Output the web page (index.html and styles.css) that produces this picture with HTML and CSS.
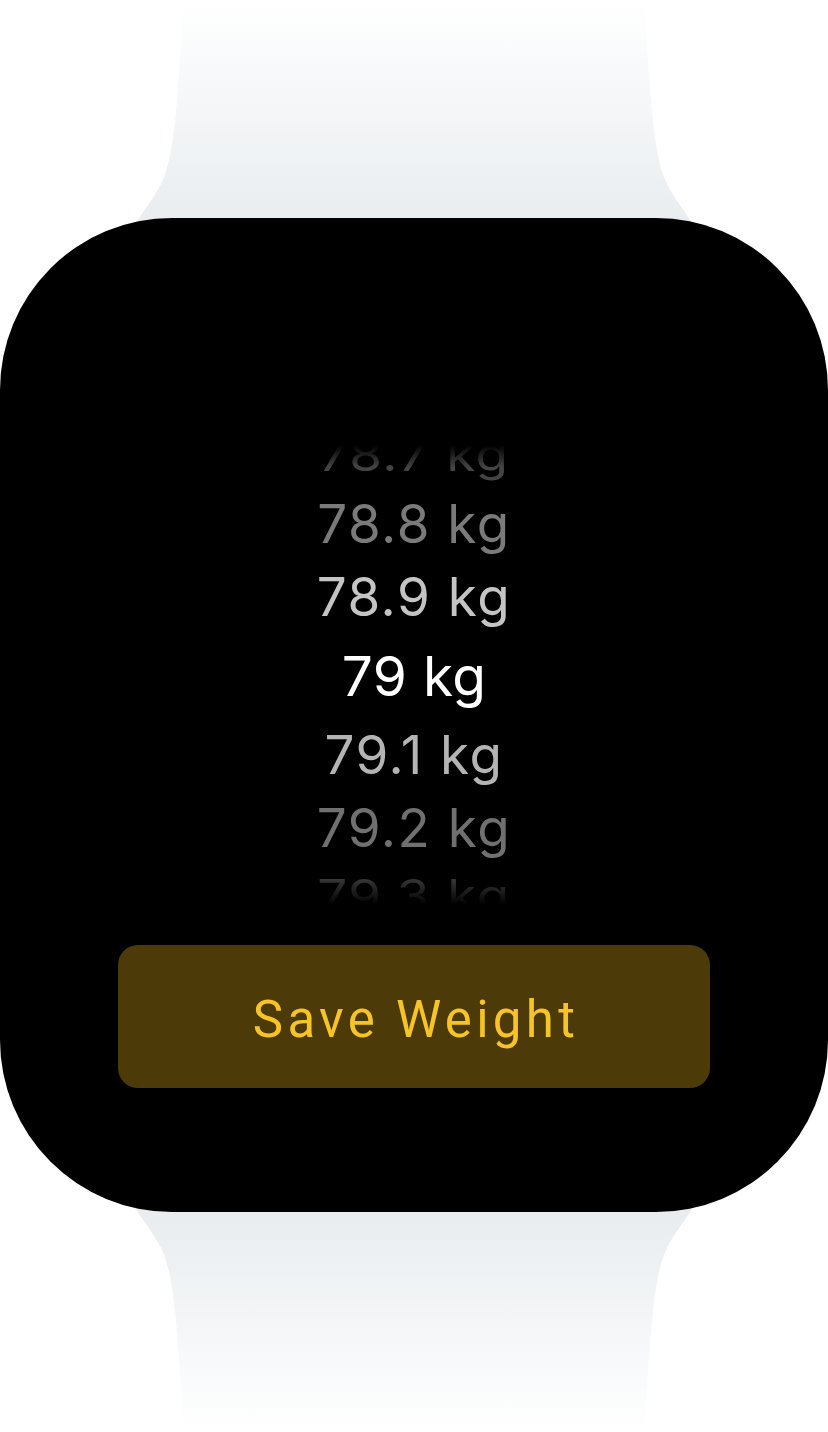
FILE: index.html
```html
<!DOCTYPE html>
<html lang="en">
<head>
<meta charset="utf-8">
<title>Save Weight</title>
<link rel="stylesheet" href="styles.css">
</head>
<body>
<div class="watch">
  <svg class="band band-top" width="828" height="240" viewBox="0 0 828 240" aria-hidden="true">
    <defs>
      <linearGradient id="gTop" x1="0" y1="0" x2="0" y2="1">
        <stop offset="0" stop-color="#ffffff"/>
        <stop offset="0.92" stop-color="#e9edf0"/>
        <stop offset="1" stop-color="#e9edf0"/>
      </linearGradient>
    </defs>
    <path d="M184,0 L180,60 C176,120 172,160 162,182 C152,202 140,214 126,240 L702,240 C688,214 676,202 666,182 C656,160 652,120 648,60 L644,0 Z" fill="url(#gTop)"/>
  </svg>
  <div class="face">
    <div class="picker">
      <div class="wheel">
        <div class="row r3 far">78.7 kg</div>
        <div class="row r2 mid">78.8 kg</div>
        <div class="row r1 near">78.9 kg</div>
        <div class="row r0 sel">79 kg</div>
        <div class="row r1 near2">79.1 kg</div>
        <div class="row r2 mid2">79.2 kg</div>
        <div class="row r3 far">79.3 kg</div>
      </div>
    </div>
    <button class="save">Save Weight</button>
  </div>
  <svg class="band band-bottom" width="828" height="240" viewBox="0 0 828 240" aria-hidden="true">
    <defs>
      <linearGradient id="gBot" x1="0" y1="0" x2="0" y2="1">
        <stop offset="0" stop-color="#e9edf0"/>
        <stop offset="0.1" stop-color="#e9edf0"/>
        <stop offset="1" stop-color="#ffffff"/>
      </linearGradient>
    </defs>
    <path d="M126,0 C140,26 152,38 162,58 C172,80 176,120 180,180 L184,240 L644,240 L648,180 C652,120 656,80 666,58 C676,38 688,26 702,0 Z" fill="url(#gBot)"/>
  </svg>
</div>
</body>
</html>
```

FILE: styles.css
```css
html, body {
  margin: 0;
  padding: 0;
  background: #ffffff;
}

body {
  width: 828px;
  height: 1432px;
  overflow: hidden;
  font-family: Inter, "Noto Sans", sans-serif;
}

.watch {
  display: flex;
  flex-direction: column;
  width: 828px;
}

.band {
  display: block;
  flex: none;
}

.band-top {
  margin-bottom: -22px;
}

.band-bottom {
  margin-top: -20px;
}

.face {
  position: relative;
  z-index: 1;
  flex: none;
  height: 994px;
  background: #000;
  border-radius: 172px;
  display: flex;
  flex-direction: column;
  align-items: center;
  box-sizing: border-box;
  padding-top: 227px;
}

.picker {
  width: 828px;
  height: 460px;
  overflow: hidden;
  -webkit-mask-image: linear-gradient(to bottom, transparent 0px, #000 22px, #000 428px, transparent 460px);
  mask-image: linear-gradient(to bottom, transparent 0px, #000 22px, #000 428px, transparent 460px);
}

.wheel {
  margin-top: -23px;
  display: flex;
  flex-direction: column;
  align-items: center;
}

.row {
  display: flex;
  align-items: center;
  justify-content: center;
  white-space: nowrap;
  font-size: 53px;
  line-height: 1;
  letter-spacing: 1.5px;
}

.far { height: 67px; color: #444444; }
.mid { height: 70px; color: #7a7a7a; }
.near { height: 77px; color: #c4c4c4; }
.sel { height: 81px; color: #ffffff; font-size: 55px; letter-spacing: 0.3px; }
.near2 { height: 77px; color: #b4b4b4; }
.mid2 { height: 69px; color: #707070; }

.r3 { transform: scaleY(0.85); }

.save {
  margin-top: 40px;
  width: 592px;
  height: 143px;
  border: none;
  border-radius: 20px;
  background: #4c3a08;
  color: #f6c426;
  font-family: Roboto, Inter, sans-serif;
  font-size: 51px;
  letter-spacing: 4.3px;
  padding: 6px 0 0 4px;
}
```
